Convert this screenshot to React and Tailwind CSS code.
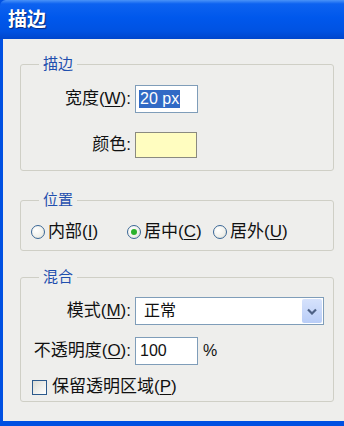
import React from "react";

const font = { fontFamily: '"Liberation Sans", "Noto Sans CJK SC", sans-serif' };

function U({ children }) {
  return <span className="underline underline-offset-[2px]">{children}</span>;
}

function Group({ title, children, className = "" }) {
  return (
    <fieldset className={"border border-[#cfcfc6] rounded-[3px] " + className}>
      <legend className="ml-[18px] px-[4px] text-[15px] leading-[16px] text-[#1f4fae]">{title}</legend>
      {children}
    </fieldset>
  );
}

function Radio({ checked }) {
  return (
    <span className="w-[14px] h-[14px] rounded-full border border-[#3a6796] bg-[radial-gradient(circle_at_35%_35%,#ffffff_0%,#f0f0ea_60%,#d6d6ce_100%)] flex items-center justify-center shrink-0">
      {checked && <span className="w-[6px] h-[6px] rounded-full bg-[#2bb12b]" />}
    </span>
  );
}

export default function App() {
  return (
    <div className="w-[344px] h-[426px] bg-[#0050e2] flex flex-col overflow-hidden" style={font}>
      <div className="h-[39px] shrink-0 bg-[linear-gradient(180deg,#4a93f8_0%,#0d62f0_10%,#0058ec_45%,#0052e2_80%,#0046cc_100%)] flex items-center pl-[8px] rounded-tl-[6px]">
        <span className="text-white font-bold text-[19px] leading-none [text-shadow:1px_1px_1px_#0a2a7a]">描边</span>
      </div>
      <div className="flex-1 ml-[3px] mb-[5px] bg-[#eeeeec] pl-[17px] pr-[10px] pt-[17px] text-[17px] text-[#111]">
        <Group title="描边">
          <div className="grid grid-cols-[110px_auto] gap-x-[4px] items-center pt-[13px] pb-[12px]">
            <span className="text-right leading-[28px]">宽度(<U>W</U>):</span>
            <div className="w-[63px] h-[28px] border border-[#7f9db9] bg-white flex items-center pl-[3px]">
              <span className="bg-[#316ac5] text-white leading-[18px] px-[1px] text-[16px]">20 px</span>
            </div>
            <span className="text-right leading-[26px] mt-[19px]">颜色:</span>
            <div className="w-[62px] h-[26px] mt-[19px] border border-[#8a8a80] bg-[#fffdc0]" />
          </div>
        </Group>

        <Group title="位置" className="mt-[21px]">
          <div className="flex items-center pl-[10px] pt-[15px] pb-[9px] leading-[18px]">
            <label className="w-[96px] flex items-center gap-[3px]"><Radio /><span>内部(<U>I</U>)</span></label>
            <label className="w-[86px] flex items-center gap-[3px]"><Radio checked /><span>居中(<U>C</U>)</span></label>
            <label className="flex items-center gap-[3px]"><Radio /><span>居外(<U>U</U>)</span></label>
          </div>
        </Group>

        <Group title="混合" className="mt-[18px]">
          <div className="grid grid-cols-[110px_auto] gap-x-[4px] items-center pt-[12px]">
            <span className="text-right leading-[28px]">模式(<U>M</U>):</span>
            <div className="w-[189px] h-[28px] border border-[#7f9db9] bg-white flex items-center justify-between pl-[8px] pr-[1px]">
              <span className="text-[16px]">正常</span>
              <span className="w-[20px] h-[24px] bg-[linear-gradient(180deg,#d6e2fc,#b9cdf7)] rounded-[2px] flex items-center justify-center">
                <svg width="10" height="7" viewBox="0 0 10 7"><path d="M1 1.5 L5 5.5 L9 1.5" fill="none" stroke="#4d6185" strokeWidth="2.2" /></svg>
              </span>
            </div>
            <span className="text-right leading-[28px] mt-[12px]">不透明度(<U>O</U>):</span>
            <div className="flex items-center gap-[5px] mt-[12px]">
              <div className="w-[63px] h-[28px] border border-[#7f9db9] bg-white flex items-center pl-[4px] text-[16px]">100</div>
              <span className="text-[16px]">%</span>
            </div>
          </div>
          <div className="flex items-center gap-[5px] pl-[11px] mt-[13px] pb-[5px] leading-[18px]">
            <span className="w-[15px] h-[15px] border border-[#2c5a8c] bg-[linear-gradient(135deg,#dcdcd4,#ffffff)] shrink-0" />
            <span>保留透明区域(<U>P</U>)</span>
          </div>
        </Group>
      </div>
    </div>
  );
}
